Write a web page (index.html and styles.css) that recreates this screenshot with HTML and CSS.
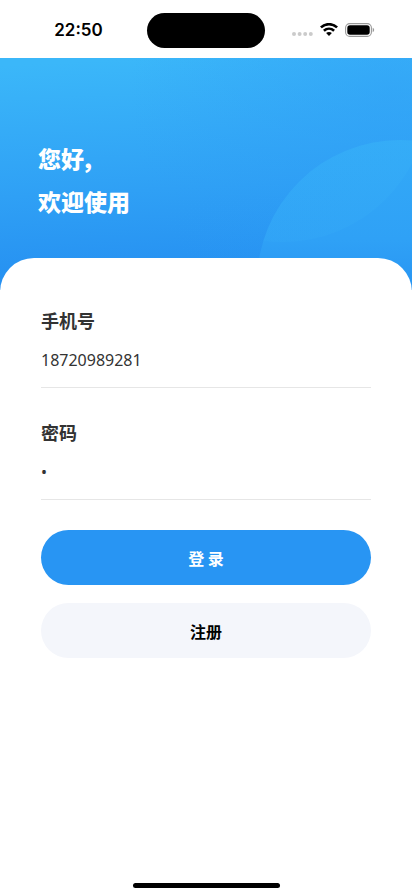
FILE: index.html
```html
<!DOCTYPE html>
<html lang="zh-CN">
<head>
<meta charset="utf-8">
<meta name="viewport" content="width=device-width, initial-scale=1">
<title>登录</title>
<link rel="stylesheet" href="styles.css">
</head>
<body>
<div class="screen">
  <div class="status-bar">
    <span class="clock">22:50</span>
    <span class="island"></span>
    <div class="indicators">
      <svg class="signal" width="22" height="16" viewBox="0 0 22 16" aria-hidden="true">
        <g fill="#cbcbcb"><circle cx="3" cy="12" r="2"/><circle cx="8.600" cy="12" r="2"/><circle cx="14.200" cy="12" r="2"/><circle cx="19.800" cy="12" r="2"/></g>
      </svg>
      <svg class="wifi" width="18" height="14" viewBox="0 0 18 14" aria-hidden="true">
        <g fill="none" stroke="#000" stroke-width="2.600">
          <path d="M.900 4.400C5.500 .100 12.500 .100 17.100 4.400"/>
          <path d="M3.900 7.800C6.900 5 11.100 5 14.100 7.800"/>
        </g>
        <path d="M6.100 10C7.800 8.600 10.200 8.600 11.900 10L9 12.900Z"/>
      </svg>
      <svg class="battery" width="30" height="14" viewBox="0 0 30 14" aria-hidden="true">
        <rect x=".600" y=".600" width="25.800" height="12.800" rx="4.200" fill="none" stroke="#999" stroke-width="1.100"/>
        <rect x="2.300" y="2.300" width="22.400" height="9.400" rx="2.700"/>
        <path d="M27.700 4.800C29.600 5.500 29.600 8.500 27.700 9.200Z" fill="#999"/>
      </svg>
    </div>
  </div>
  <header class="hero">
    <svg class="hero-art" viewBox="0 0 412 232" preserveAspectRatio="xMaxYMin slice" aria-hidden="true">
      <defs>
        <linearGradient id="leaf" x1="0" y1="0" x2="0" y2="1">
          <stop offset="0" stop-color="#33aaf7"/>
          <stop offset=".35" stop-color="#2fa1f6"/>
          <stop offset=".55" stop-color="#2793f2"/>
        </linearGradient>
        <linearGradient id="lens" x1="1" y1="0" x2=".3" y2="1">
          <stop offset=".4" stop-color="#3db8f8" stop-opacity=".2"/>
          <stop offset="1" stop-color="#3db8f8" stop-opacity=".1"/>
        </linearGradient>
        <clipPath id="leaf-clip"><circle cx="400" cy="225" r="143"/></clipPath>
      </defs>
      <circle cx="400" cy="225" r="143" fill="url(#leaf)"/>
      <circle cx="283" cy="39" r="145" fill="url(#lens)" clip-path="url(#leaf-clip)"/>
    </svg>
    <h1 class="greeting">您好,<br>欢迎使用</h1>
  </header>
  <main class="card">
    <form class="login">
      <div class="field">
        <label for="phone">手机号</label>
        <input id="phone" type="tel" value="18720989281">
      </div>
      <div class="field">
        <label for="password">密码</label>
        <input id="password" type="password" value="1">
      </div>
      <div class="actions">
        <button class="btn btn-primary" type="submit">登 录</button>
        <button class="btn btn-plain" type="button">注册</button>
      </div>
    </form>
  </main>
  <div class="home-indicator"></div>
</div>
</body>
</html>
```
FILE: styles.css
```css
* {
  box-sizing: border-box;
}

body {
  margin: 0;
  background: #fff;
  font-family: "Noto Sans", "Noto Sans CJK SC", sans-serif;
}

.screen {
  display: flex;
  flex-direction: column;
  min-height: 100vh;
}

.status-bar {
  display: grid;
  grid-template-columns: 1fr 118px 1fr;
  align-items: center;
  height: 58px;
  padding-top: 2px;
}

.clock {
  padding-left: 10px;
  font: 600 17px/20px Inter, sans-serif;
  text-align: center;
}

.island {
  height: 35px;
  border-radius: 18px;
  background: #000;
}

.indicators {
  display: flex;
  align-items: center;
  gap: 7px;
  padding-left: 26px;
}

.hero {
  position: relative;
  height: 232px;
  padding: 79px 38px 0;
  background:
    radial-gradient(circle at 95% 15%, rgba(47, 158, 246, .5), transparent 60%),
    linear-gradient(177deg, #3bb7f9 3%, #2fa0f5 55%, #258ff1 92%);
}

.hero-art {
  position: absolute;
  inset: 0;
  width: 100%;
  height: 100%;
}

.greeting {
  position: relative;
  margin: 0;
  color: #fff;
  font-size: 23px;
  font-weight: 900;
  line-height: 43px;
  font-family: "Noto Sans CJK SC", sans-serif;
}

.card {
  position: relative;
  flex: 1;
  margin-top: -32px;
  padding: 48px 41px 32px;
  border-radius: 34px 34px 0 0;
  background: #fff;
}

.field {
  display: flex;
  flex-direction: column;
  gap: 10px;
  margin-bottom: 30px;
}

.field label {
  color: #333;
  font-size: 18px;
  font-weight: 700;
  line-height: 30px;
}

.field input {
  width: 100%;
  height: 42px;
  padding: 0 0 14px;
  border: 0;
  border-bottom: 1px solid #e6e6e6;
  border-radius: 0;
  outline: 0;
  background: transparent;
  color: #333;
  font: 16px/24px "Noto Sans", sans-serif;
}

.actions {
  display: flex;
  flex-direction: column;
  gap: 18px;
}

.btn {
  height: 55px;
  border: 0;
  border-radius: 28px;
  font: 700 16px/24px "Noto Sans CJK SC", sans-serif;
}

.btn-primary {
  background: #2895f3;
  color: #fff;
}

.btn-plain {
  background: #f4f6fb;
  color: #000;
}

.home-indicator {
  align-self: center;
  width: 147px;
  height: 5px;
  margin-bottom: 8px;
  border-radius: 3px;
  background: #000;
}
```
